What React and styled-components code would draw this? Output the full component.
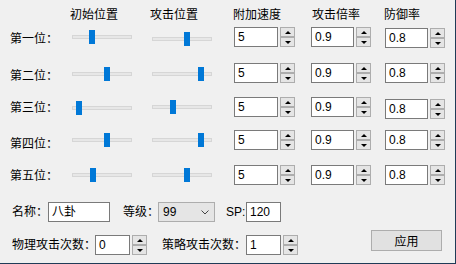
import React from 'react';
import styled, { createGlobalStyle } from 'styled-components';

const Global = createGlobalStyle`
  html, body {
    margin: 0;
    padding: 0;
    background: #f0f0f0;
  }
  body {
    font-family: "Liberation Sans", "Noto Sans CJK SC", sans-serif;
    font-size: 12px;
    color: #000;
  }
`;

const Window = styled.div`
  box-sizing: border-box;
  width: 456px;
  height: 264px;
  background: #f0f0f0;
  border-right: 1px solid #1f3b57;
  border-bottom: 1px solid #1f3b57;
  padding: 8px 0 0 10px;
  overflow: hidden;
`;

const Grid = styled.div`
  display: grid;
  grid-template-columns: 62px 80px 82px 77px 74px 70px;
  grid-template-rows: 19px 36px 34px 33px 35px 37px;
`;

const Header = styled.div`
  line-height: 16px;
  margin-top: -1px;
  margin-left: ${({ $dx }) => $dx || 0}px;
  white-space: nowrap;
`;

const Cell = styled.div`
  display: flex;
  align-items: center;
  height: 20px;
  margin-top: ${({ $dy }) => $dy || 0}px;
`;

const RowLabel = styled.span`
  line-height: 14px;
  white-space: nowrap;
`;

const Track = styled.div`
  position: relative;
  box-sizing: border-box;
  width: 60px;
  height: 4px;
  background: #e7e7e7;
  border: 1px solid #d6d6d6;
  margin-top: ${({ $dy }) => $dy * 2}px;
`;

const Thumb = styled.div`
  position: absolute;
  top: -6px;
  left: ${({ $pos }) => $pos - 1}px;
  width: 6px;
  height: 14px;
  background: #0078d7;
`;

const Box = styled.div`
  box-sizing: border-box;
  flex-shrink: 0;
  width: ${({ $w }) => $w}px;
  height: 20px;
  background: #fff;
  border: 1px solid #7a7a7a;
  padding-left: 3px;
  display: flex;
  align-items: center;
  line-height: 14px;
  white-space: nowrap;
`;

const Spin = styled.div`
  display: flex;
  flex-direction: column;
  justify-content: space-between;
  flex-shrink: 0;
  width: 15px;
  height: 20px;
  margin-left: 2px;
`;

const SpinButton = styled.div`
  box-sizing: border-box;
  height: 10px;
  background: #e5e5e5;
  border: 1px solid #adadad;
  display: flex;
  align-items: center;
  justify-content: center;
`;

const Arrow = styled.div`
  width: 0;
  height: 0;
  border-left: 3px solid transparent;
  border-right: 3px solid transparent;
  ${({ $down }) =>
    $down ? 'border-top: 3px solid #000;' : 'border-bottom: 3px solid #000;'}
`;

const Bottom = styled.div`
  display: flex;
  align-items: center;
  height: 20px;
  padding-left: 2px;
  margin-top: ${({ $mt }) => $mt}px;
`;

const Label = styled.span`
  display: inline-block;
  flex-shrink: 0;
  min-width: 0;
  width: ${({ $w }) => $w}px;
  margin-left: ${({ $ml }) => $ml || 0}px;
  line-height: 14px;
  white-space: nowrap;
`;

const Combo = styled.div`
  box-sizing: border-box;
  flex-shrink: 0;
  width: 57px;
  height: 20px;
  background: #e5e5e5;
  border: 1px solid #adadad;
  display: flex;
  align-items: center;
  justify-content: space-between;
  padding: 0 5px 0 4px;
`;

const Button = styled.div`
  box-sizing: border-box;
  flex-shrink: 0;
  width: 71px;
  height: 21px;
  margin-left: 73px;
  margin-top: -10px;
  background: #e1e1e1;
  border: 1px solid #adadad;
  display: flex;
  align-items: center;
  justify-content: center;
`;

const rows = [
  { name: '第一位：', ly: 2, s1: [17, -1], s2: [32, 3], b3: 1 },
  { name: '第二位：', ly: 3, s1: [32, 2], s2: [46, 1], b3: 0 },
  { name: '第三位：', ly: 1, s1: [4, 1], s2: [18, -1], b3: 2 },
  { name: '第四位：', ly: 4, s1: [32, 0], s2: [46, 0], b3: 0 },
  { name: '第五位：', ly: 1, s1: [18, -1], s2: [32, -1], b3: 0 },
];

const Spinner = () => (
  <Spin>
    <SpinButton>
      <Arrow />
    </SpinButton>
    <SpinButton>
      <Arrow $down />
    </SpinButton>
  </Spin>
);

const Slider = ({ pos, dy }) => (
  <Cell>
    <Track $dy={dy / 2}>
      <Thumb $pos={pos} />
    </Track>
  </Cell>
);

const Chevron = () => (
  <svg width="8" height="5" viewBox="0 0 8 5">
    <path d="M0.5 0.5 L4 4 L7.5 0.5" fill="none" stroke="#444" strokeWidth="1" />
  </svg>
);

const App = () => {
  return (
    <Window>
      <Global />
      <Grid>
        <div />
        <Header $dx={-2}>初始位置</Header>
        <Header $dx={-2}>攻击位置</Header>
        <Header $dx={-1}>附加速度</Header>
        <Header $dx={1}>攻击倍率</Header>
        <Header $dx={-1}>防御率</Header>
        {rows.map((r) => (
          <React.Fragment key={r.name}>
            <Cell $dy={r.ly}>
              <RowLabel>{r.name}</RowLabel>
            </Cell>
            <Slider pos={r.s1[0]} dy={r.s1[1]} />
            <Slider pos={r.s2[0]} dy={r.s2[1]} />
            <Cell>
              <Box $w={44}>5</Box>
              <Spinner />
            </Cell>
            <Cell>
              <Box $w={43}>0.9</Box>
              <Spinner />
            </Cell>
            <Cell $dy={r.b3}>
              <Box $w={43}>0.8</Box>
              <Spinner />
            </Cell>
          </React.Fragment>
        ))}
      </Grid>
      <Bottom $mt={0}>
        <Label $w={36}>名称：</Label>
        <Box $w={62}>八卦</Box>
        <Label $w={35} $ml={13}>等级：</Label>
        <Combo>
          <span>99</span>
          <Chevron />
        </Combo>
        <Label $w={20} $ml={11}>SP:</Label>
        <Box $w={35}>120</Box>
      </Bottom>
      <Bottom $mt={13}>
        <Label $w={83}>物理攻击次数：</Label>
        <Box $w={35}>0</Box>
        <Spinner />
        <Label $w={84} $ml={15}>策略攻击次数：</Label>
        <Box $w={35}>1</Box>
        <Spinner />
        <Button>应用</Button>
      </Bottom>
    </Window>
  );
};

export default App;
